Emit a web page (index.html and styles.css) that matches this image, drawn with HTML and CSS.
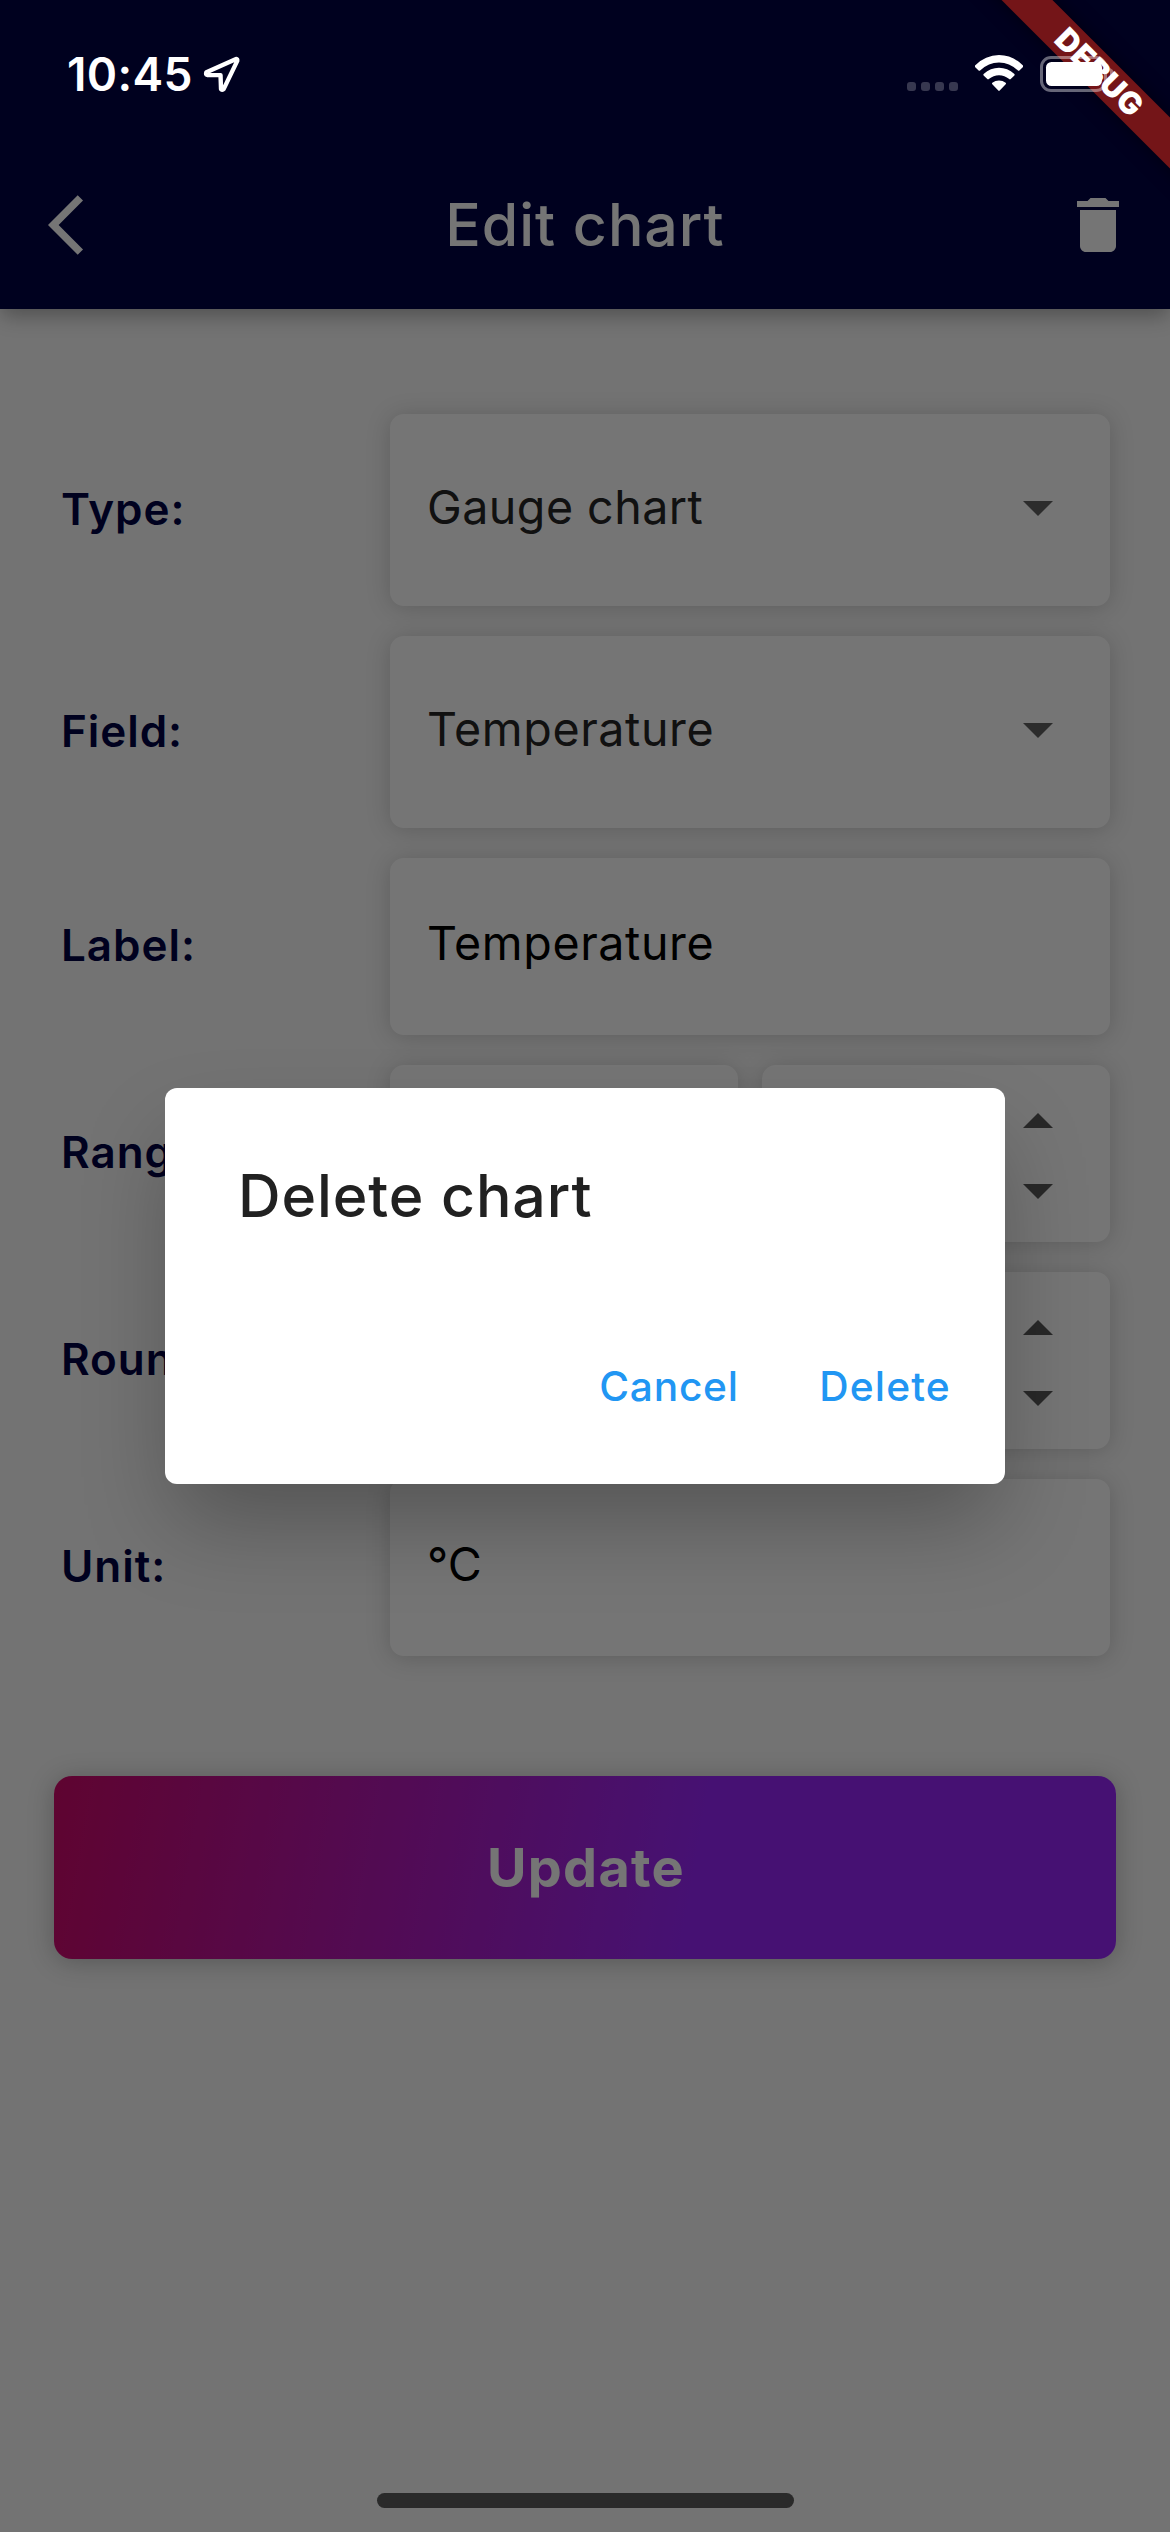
FILE: index.html
```html
<!DOCTYPE html>
<html lang="en">
<head>
<meta charset="utf-8">
<title>Edit chart</title>
<link rel="stylesheet" href="styles.css">
</head>
<body>
<div class="app">
  <header class="appbar">
    <svg class="icon" viewBox="0 0 24 24"><path d="M11.67 3.87 9.9 2.1 0 12l9.9 9.9 1.77-1.77L3.54 12z"/></svg>
    <h1 class="appbar-title">Edit chart</h1>
    <svg class="icon icon-trash" viewBox="0 0 24 24"><path d="M6 19c0 1.1.9 2 2 2h8c1.1 0 2-.9 2-2V7H6v12zM19 4h-3.5l-1-1h-5l-1 1H5v2h14V4z"/></svg>
  </header>
  <main class="form">
    <div class="row row-tall">
      <span class="label">Type:</span>
      <div class="field"><span class="value value-muted value-long">Gauge chart</span><svg class="arrow" viewBox="0 0 10 5"><path d="M0 0h10L5 5z"/></svg></div>
    </div>
    <div class="row row-tall">
      <span class="label">Field:</span>
      <div class="field"><span class="value value-muted">Temperature</span><svg class="arrow" viewBox="0 0 10 5"><path d="M0 0h10L5 5z"/></svg></div>
    </div>
    <div class="row">
      <span class="label">Label:</span>
      <div class="field field-text"><span class="value">Temperature</span></div>
    </div>
    <div class="row">
      <span class="label">Range:</span>
      <div class="field"></div>
      <div class="field field-number">
        <div class="spinner"><svg class="arrow" viewBox="0 0 10 5"><path d="M0 5h10L5 0z"/></svg><svg class="arrow" viewBox="0 0 10 5"><path d="M0 0h10L5 5z"/></svg></div>
      </div>
    </div>
    <div class="row">
      <span class="label">Round:</span>
      <div class="field field-number">
        <div class="spinner"><svg class="arrow" viewBox="0 0 10 5"><path d="M0 5h10L5 0z"/></svg><svg class="arrow" viewBox="0 0 10 5"><path d="M0 0h10L5 5z"/></svg></div>
      </div>
    </div>
    <div class="row">
      <span class="label">Unit:</span>
      <div class="field field-text"><span class="value value-unit">°C</span></div>
    </div>
    <button class="update">Update</button>
  </main>
</div>

<div class="scrim">
  <section class="dialog">
    <h2 class="dialog-title">Delete chart</h2>
    <div class="dialog-actions">
      <button class="action">Cancel</button>
      <button class="action action-delete">Delete</button>
    </div>
  </section>
</div>

<div class="ribbon"><span class="ribbon-text">DEBUG</span></div>

<div class="statusbar">
  <span class="time">10:45</span>
  <svg class="location" viewBox="0 0 38 38"><path d="M34 3.5 3.5 17.2q-1 2.3.8 2.8L18 20.2l.5 14.300q1.500 1.400 2.700 0L35.200 5.500q.3-1.800-1.200-2z"/></svg>
  <div class="indicators">
    <div class="signal"><i></i><i></i><i></i><i></i></div>
    <svg class="wifi" viewBox="0 0 48 36">
      <path d="M0 10.500Q10.500 0 24 0t24 10.500c.4.500.4 1 0 1.500l-3.600 3.400c-.5.500-1 .500-1.500 0Q34.500 7.400 24 7.400T5.100 15.400c-.5.500-1 .500-1.500 0L0 12c-.4-.5-.4-1 0-1.500z"/>
      <path d="M8.600 19Q15.500 12.800 24 12.800T39.400 19c.4.500.4 1 0 1.500l-3.700 3.500c-.5.500-1 .500-1.500 0Q29.600 20.200 24 20.200T13.800 24c-.5.500-1 .500-1.500 0l-3.700-3.500c-.4-.5-.4-1 0-1.500z"/>
      <path d="M17.300 27.700Q20.300 25.500 24 25.500t6.700 2.200c.5.500.5 1 0 1.500l-6 6.300c-.5.500-.9.500-1.400 0l-6-6.300c-.5-.5-.5-1 0-1.500z"/>
    </svg>
    <svg class="battery" viewBox="0 0 73 36">
      <rect x="1.500" y="1.500" width="64" height="33" rx="9.500" fill="none" stroke="#fff" stroke-opacity=".4" stroke-width="3"/>
      <path d="M70 12q4 2 4 6t-4 6z" fill="#fff" fill-opacity=".4"/>
      <rect x="6" y="6" width="56" height="24" rx="5.500" fill="#fff"/>
    </svg>
  </div>
</div>

<div class="home-indicator"></div>
</body>
</html>
```
FILE: styles.css
```css
* { box-sizing: border-box; }

body {
  margin: 0;
  width: 1170px;
  height: 2532px;
  position: relative;
  overflow: hidden;
  font-family: Inter, "Liberation Sans", sans-serif;
}

h1, h2 { margin: 0; font-weight: 500; }

button {
  border: 0;
  padding: 0;
  background: none;
  font-family: inherit;
}

.app {
  height: 2532px;
  background: #fafafa;
}

/* App bar */
.appbar {
  position: relative;
  display: grid;
  grid-template-columns: 1fr auto 1fr;
  align-items: center;
  height: 309px;
  padding: 141px 36px 0 48px;
  background: #000444;
  box-shadow: 0 8px 20px -2px rgba(0, 0, 0, .32);
}

.icon { width: 72px; height: 72px; fill: #fff; }
.icon-trash { justify-self: end; }

.appbar-title {
  font-size: 59px;
  line-height: 72px;
  letter-spacing: .970px;
  margin-left: -12px;
  color: #fff;
}

/* Form */
.form {
  display: flex;
  flex-direction: column;
  gap: 30px;
  padding: 105px 60px 0;
}

.row {
  display: flex;
  gap: 24px;
  height: 177px;
}

.row-tall { height: 192px; }

.label {
  width: 306px;
  display: flex;
  align-items: center;
  padding: 0 0 3px 1px;
  color: #000444;
  font-size: 44px;
  font-weight: 600;
  letter-spacing: .950px;
}

.field {
  flex: 1;
  display: flex;
  align-items: center;
  justify-content: space-between;
  padding: 0 57px 4px 37px;
  border-radius: 14px;
  background: #fff;
  box-shadow: 0 2px 24px rgba(0, 0, 0, .18);
}

.field-text { padding-bottom: 6px; }

.field-number {
  justify-content: flex-end;
  padding-bottom: 0;
}

.value {
  font-size: 46.600px;
  letter-spacing: .610px;
  color: #000;
  padding-bottom: 2px;
}

.value-muted { color: #262626; }
.value-long { letter-spacing: .460px; }
.value-unit { letter-spacing: 0; }

.arrow {
  display: block;
  width: 30px;
  height: 15px;
  fill: #616161;
}

.spinner {
  display: flex;
  flex-direction: column;
  gap: 56px;
  padding-top: 5px;
}

.spinner .arrow { fill: #585858; }

.update {
  height: 183px;
  margin: 90px -6px 0;
  padding-left: 2px;
  border-radius: 18px;
  background: linear-gradient(100deg, #cf096a 0%, #9a27fa 60%);
  box-shadow: 0 3px 27px rgba(0, 0, 0, .24);
  color: #fff;
  font-size: 54px;
  font-weight: 700;
  letter-spacing: 1.300px;
}

/* Dialog */
.scrim {
  position: absolute;
  inset: 0;
  padding-top: 39px;
  display: flex;
  align-items: center;
  justify-content: center;
  background: rgba(0, 0, 0, .54);
}

.dialog {
  width: 840px;
  height: 396px;
  display: flex;
  flex-direction: column;
  justify-content: space-between;
  padding: 72px 24px 25px 73px;
  border-radius: 12px;
  background: #fff;
  box-shadow: 0 45px 90px -10px rgba(0, 0, 0, .28);
}

.dialog-title {
  font-size: 59px;
  line-height: 72px;
  letter-spacing: .900px;
  color: #212121;
}

.dialog-actions {
  display: flex;
  justify-content: flex-end;
  gap: 24px;
}

.action {
  width: 192px;
  height: 144px;
  color: #2196f3;
  font-size: 40.700px;
  font-weight: 500;
  letter-spacing: .740px;
}

.action-delete { letter-spacing: 1.110px; }

/* Debug ribbon over the top right corner */
.ribbon {
  position: absolute;
  left: 948px;
  top: 53px;
  width: 300px;
  height: 36px;
  display: flex;
  align-items: center;
  justify-content: center;
  transform: rotate(45deg);
  background: #741518;
  box-shadow: 0 0 18px rgba(0, 0, 0, .5);
}

.ribbon-text {
  padding-left: 4px;
  color: #fff;
  font-size: 31px;
  font-weight: 900;
  letter-spacing: .400px;
  line-height: 36px;
}

/* System status bar drawn over the app */
.statusbar {
  position: absolute;
  left: 0;
  top: 0;
  width: 1170px;
  height: 148px;
  display: flex;
  align-items: center;
  padding: 0 57px 0 67px;
}

.time {
  color: #fff;
  font-size: 46px;
  font-weight: 600;
  letter-spacing: .350px;
}

.location {
  width: 37px;
  height: 38px;
  margin: 0 auto 0 10px;
  overflow: visible;
  fill: none;
  stroke: #fff;
  stroke-width: 4.500;
  stroke-linejoin: round;
}

.indicators {
  display: flex;
  align-items: center;
}

.signal {
  display: flex;
  gap: 5px;
  padding-top: 25px;
  margin-right: 17px;
}

.signal i {
  width: 9px;
  height: 9px;
  border-radius: 3px;
  background: #373850;
}

.wifi { width: 48px; height: 36px; margin: -2px 17px 0 0; fill: #fff; }
.battery { width: 73px; height: 36px; overflow: visible; }

.home-indicator {
  position: absolute;
  left: 377px;
  bottom: 24px;
  width: 417px;
  height: 15px;
  border-radius: 8px;
  background: #2a2a2a;
}
```
